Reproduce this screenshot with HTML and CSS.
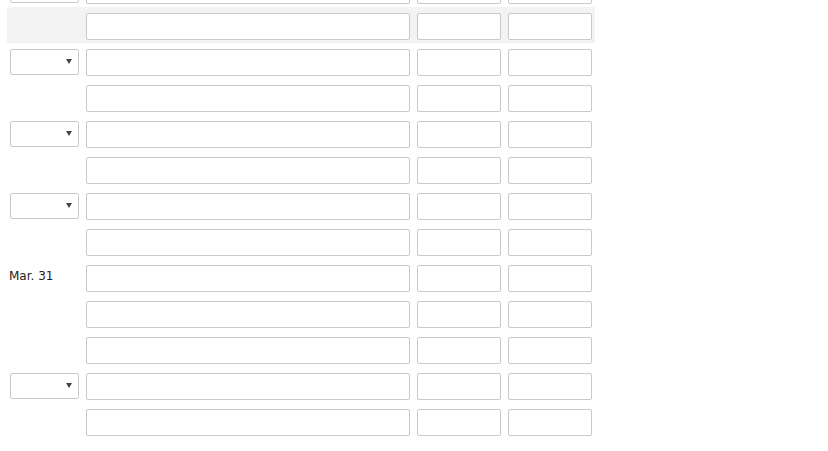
FILE: index.html
```html
<!DOCTYPE html>
<html>
<head>
<meta charset="utf-8">
<link rel="stylesheet" href="styles.css">
</head>
<body>
<div class="sheet">
  <div class="row">
    <div class="cell-date"><div class="dd"><select class="dd-select"></select><span class="dd-arrow"></span></div></div>
    <input class="field wide" type="text"><input class="field num" type="text"><input class="field num" type="text">
  </div>
  <div class="row hl">
    <div class="cell-date"></div>
    <input class="field wide" type="text"><input class="field num" type="text"><input class="field num" type="text">
  </div>
  <div class="row">
    <div class="cell-date"><div class="dd"><select class="dd-select"></select><span class="dd-arrow"></span></div></div>
    <input class="field wide" type="text"><input class="field num" type="text"><input class="field num" type="text">
  </div>
  <div class="row">
    <div class="cell-date"></div>
    <input class="field wide" type="text"><input class="field num" type="text"><input class="field num" type="text">
  </div>
  <div class="row">
    <div class="cell-date"><div class="dd"><select class="dd-select"></select><span class="dd-arrow"></span></div></div>
    <input class="field wide" type="text"><input class="field num" type="text"><input class="field num" type="text">
  </div>
  <div class="row">
    <div class="cell-date"></div>
    <input class="field wide" type="text"><input class="field num" type="text"><input class="field num" type="text">
  </div>
  <div class="row">
    <div class="cell-date"><div class="dd"><select class="dd-select"></select><span class="dd-arrow"></span></div></div>
    <input class="field wide" type="text"><input class="field num" type="text"><input class="field num" type="text">
  </div>
  <div class="row">
    <div class="cell-date"></div>
    <input class="field wide" type="text"><input class="field num" type="text"><input class="field num" type="text">
  </div>
  <div class="row">
    <div class="cell-date"><span class="date-label">Mar. 31</span></div>
    <input class="field wide" type="text"><input class="field num" type="text"><input class="field num" type="text">
  </div>
  <div class="row">
    <div class="cell-date"></div>
    <input class="field wide" type="text"><input class="field num" type="text"><input class="field num" type="text">
  </div>
  <div class="row">
    <div class="cell-date"></div>
    <input class="field wide" type="text"><input class="field num" type="text"><input class="field num" type="text">
  </div>
  <div class="row">
    <div class="cell-date"><div class="dd"><select class="dd-select"></select><span class="dd-arrow"></span></div></div>
    <input class="field wide" type="text"><input class="field num" type="text"><input class="field num" type="text">
  </div>
  <div class="row">
    <div class="cell-date"></div>
    <input class="field wide" type="text"><input class="field num" type="text"><input class="field num" type="text">
  </div>
</div>
</body>
</html>
```
FILE: styles.css
```css
html, body {
  margin: 0;
  padding: 0;
  background: #ffffff;
  font-family: "DejaVu Sans", Verdana, sans-serif;
  font-size: 12px;
  color: #222;
}

.sheet {
  margin-top: -29px;
  padding-left: 7px;
  width: 588px;
}

.row {
  display: grid;
  grid-template-columns: 69px 324px 84px 84px;
  column-gap: 7px;
  align-items: start;
  height: 36px;
  box-sizing: border-box;
  padding: 6px 3px 0 3px;
}

.row.hl {
  background: #f3f3f3;
}

.cell-date {
  height: 27px;
}

.date-label {
  display: block;
  margin-left: -1px;
  padding-top: 4px;
  line-height: 14px;
  color: #222;
}

.field {
  display: block;
  box-sizing: border-box;
  width: 100%;
  height: 27px;
  margin: 0;
  padding: 0 4px;
  border: 1px solid #c9c9c9;
  border-radius: 2px;
  background: #fff;
  outline: none;
  font: inherit;
}

.dd {
  position: relative;
  width: 69px;
  height: 26px;
}

.dd-select {
  display: block;
  box-sizing: border-box;
  width: 100%;
  height: 26px;
  margin: 0;
  padding: 0;
  border: 1px solid #c9c9c9;
  border-radius: 2px;
  background: #fff;
  -webkit-appearance: none;
  appearance: none;
  outline: none;
}

.dd-arrow {
  position: absolute;
  left: 56px;
  top: 10px;
  width: 0;
  height: 0;
  border-left: 3px solid transparent;
  border-right: 3px solid transparent;
  border-top: 5px solid #444;
}
```
